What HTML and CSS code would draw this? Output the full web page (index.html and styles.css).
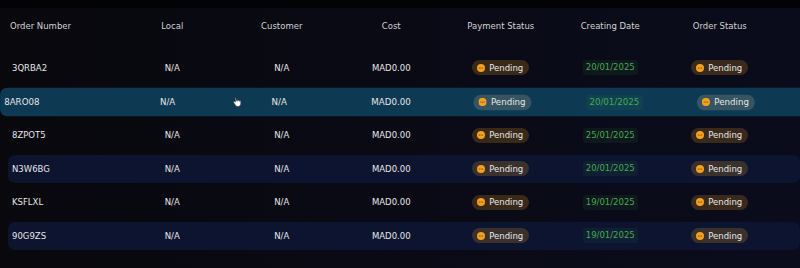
FILE: index.html
```html
<!DOCTYPE html>
<html>
<head>
<meta charset="utf-8">
<link rel="stylesheet" href="styles.css">
</head>
<body>
<div class="panel">
  <div class="row head">
    <div class="cell first">Order Number</div>
    <div class="cell">Local</div>
    <div class="cell">Customer</div>
    <div class="cell">Cost</div>
    <div class="cell">Payment Status</div>
    <div class="cell">Creating Date</div>
    <div class="cell">Order Status</div>
  </div>

  <div class="row">
    <div class="cell first">3QRBA2</div>
    <div class="cell">N/A</div>
    <div class="cell">N/A</div>
    <div class="cell">MAD0.00</div>
    <div class="cell"><span class="pill"><svg class="ic" viewBox="0 0 10 10"><circle cx="5" cy="5" r="5" fill="#f4a11f"/><circle cx="3" cy="5" r=".75" fill="#6b4210"/><circle cx="5" cy="5" r=".75" fill="#6b4210"/><circle cx="7" cy="5" r=".75" fill="#6b4210"/></svg>Pending</span></div>
    <div class="cell"><span class="date">20/01/2025</span></div>
    <div class="cell"><span class="pill"><svg class="ic" viewBox="0 0 10 10"><circle cx="5" cy="5" r="5" fill="#f4a11f"/><circle cx="3" cy="5" r=".75" fill="#6b4210"/><circle cx="5" cy="5" r=".75" fill="#6b4210"/><circle cx="7" cy="5" r=".75" fill="#6b4210"/></svg>Pending</span></div>
  </div>

  <div class="row hover">
    <div class="cell first">8ARO08</div>
    <div class="cell">N/A</div>
    <div class="cell">N/A</div>
    <div class="cell">MAD0.00</div>
    <div class="cell"><span class="pill"><svg class="ic" viewBox="0 0 10 10"><circle cx="5" cy="5" r="5" fill="#f4a11f"/><circle cx="3" cy="5" r=".75" fill="#6b4210"/><circle cx="5" cy="5" r=".75" fill="#6b4210"/><circle cx="7" cy="5" r=".75" fill="#6b4210"/></svg>Pending</span></div>
    <div class="cell"><span class="date">20/01/2025</span></div>
    <div class="cell"><span class="pill"><svg class="ic" viewBox="0 0 10 10"><circle cx="5" cy="5" r="5" fill="#f4a11f"/><circle cx="3" cy="5" r=".75" fill="#6b4210"/><circle cx="5" cy="5" r=".75" fill="#6b4210"/><circle cx="7" cy="5" r=".75" fill="#6b4210"/></svg>Pending</span></div>
    <svg class="cursor" viewBox="0 0 12 14"><path d="M3.5 1.2c.6 0 1 .4 1 1v4.3h.4V5.4c0-.5.4-.9.9-.9s.9.4.9.9v1.2h.3v-.8c0-.5.4-.9.9-.9s.9.4.9.9v1h.2v-.4c0-.5.4-.8.8-.8s.8.4.8.8v3.7c0 1.9-1.4 3.4-3.3 3.4H6.6c-1.1 0-2-.5-2.6-1.4L1.3 8.2c-.3-.4-.2-1 .2-1.2.4-.3.9-.2 1.2.1l.8 1V2.2c0-.6.4-1 1-1z" fill="#fff" stroke="#222" stroke-width=".6"/></svg>
  </div>

  <div class="row">
    <div class="cell first">8ZPOT5</div>
    <div class="cell">N/A</div>
    <div class="cell">N/A</div>
    <div class="cell">MAD0.00</div>
    <div class="cell"><span class="pill"><svg class="ic" viewBox="0 0 10 10"><circle cx="5" cy="5" r="5" fill="#f4a11f"/><circle cx="3" cy="5" r=".75" fill="#6b4210"/><circle cx="5" cy="5" r=".75" fill="#6b4210"/><circle cx="7" cy="5" r=".75" fill="#6b4210"/></svg>Pending</span></div>
    <div class="cell"><span class="date">25/01/2025</span></div>
    <div class="cell"><span class="pill"><svg class="ic" viewBox="0 0 10 10"><circle cx="5" cy="5" r="5" fill="#f4a11f"/><circle cx="3" cy="5" r=".75" fill="#6b4210"/><circle cx="5" cy="5" r=".75" fill="#6b4210"/><circle cx="7" cy="5" r=".75" fill="#6b4210"/></svg>Pending</span></div>
  </div>

  <div class="row alt">
    <div class="cell first">N3W6BG</div>
    <div class="cell">N/A</div>
    <div class="cell">N/A</div>
    <div class="cell">MAD0.00</div>
    <div class="cell"><span class="pill"><svg class="ic" viewBox="0 0 10 10"><circle cx="5" cy="5" r="5" fill="#f4a11f"/><circle cx="3" cy="5" r=".75" fill="#6b4210"/><circle cx="5" cy="5" r=".75" fill="#6b4210"/><circle cx="7" cy="5" r=".75" fill="#6b4210"/></svg>Pending</span></div>
    <div class="cell"><span class="date">20/01/2025</span></div>
    <div class="cell"><span class="pill"><svg class="ic" viewBox="0 0 10 10"><circle cx="5" cy="5" r="5" fill="#f4a11f"/><circle cx="3" cy="5" r=".75" fill="#6b4210"/><circle cx="5" cy="5" r=".75" fill="#6b4210"/><circle cx="7" cy="5" r=".75" fill="#6b4210"/></svg>Pending</span></div>
  </div>

  <div class="row">
    <div class="cell first">KSFLXL</div>
    <div class="cell">N/A</div>
    <div class="cell">N/A</div>
    <div class="cell">MAD0.00</div>
    <div class="cell"><span class="pill"><svg class="ic" viewBox="0 0 10 10"><circle cx="5" cy="5" r="5" fill="#f4a11f"/><circle cx="3" cy="5" r=".75" fill="#6b4210"/><circle cx="5" cy="5" r=".75" fill="#6b4210"/><circle cx="7" cy="5" r=".75" fill="#6b4210"/></svg>Pending</span></div>
    <div class="cell"><span class="date">19/01/2025</span></div>
    <div class="cell"><span class="pill"><svg class="ic" viewBox="0 0 10 10"><circle cx="5" cy="5" r="5" fill="#f4a11f"/><circle cx="3" cy="5" r=".75" fill="#6b4210"/><circle cx="5" cy="5" r=".75" fill="#6b4210"/><circle cx="7" cy="5" r=".75" fill="#6b4210"/></svg>Pending</span></div>
  </div>

  <div class="row alt">
    <div class="cell first">90G9ZS</div>
    <div class="cell">N/A</div>
    <div class="cell">N/A</div>
    <div class="cell">MAD0.00</div>
    <div class="cell"><span class="pill"><svg class="ic" viewBox="0 0 10 10"><circle cx="5" cy="5" r="5" fill="#f4a11f"/><circle cx="3" cy="5" r=".75" fill="#6b4210"/><circle cx="5" cy="5" r=".75" fill="#6b4210"/><circle cx="7" cy="5" r=".75" fill="#6b4210"/></svg>Pending</span></div>
    <div class="cell"><span class="date">19/01/2025</span></div>
    <div class="cell"><span class="pill"><svg class="ic" viewBox="0 0 10 10"><circle cx="5" cy="5" r="5" fill="#f4a11f"/><circle cx="3" cy="5" r=".75" fill="#6b4210"/><circle cx="5" cy="5" r=".75" fill="#6b4210"/><circle cx="7" cy="5" r=".75" fill="#6b4210"/></svg>Pending</span></div>
  </div>
</div>
</body>
</html>
```
FILE: styles.css
```css
html, body {
  margin: 0;
  padding: 0;
  background: #030305;
  width: 800px;
  height: 268px;
  overflow: hidden;
}
.panel {
  margin-top: 8px;
  height: 260px;
  padding-left: 8px;
  background: linear-gradient(90deg, #08080d 0%, #090a14 50%, #0a0c1c 100%);
  font-family: "DejaVu Sans", "Liberation Sans", sans-serif;
  font-size: 8.5px;
  color: #e6e6e6;
  display: flex;
  flex-direction: column;
  gap: 5.6px;
}
.row {
  position: relative;
  display: grid;
  grid-template-columns: repeat(7, 109.5px) 1fr;
  align-items: center;
  height: 28px;
  border-radius: 7px;
}
.row.head {
  height: 36px;
  margin-bottom: 4.4px;
  color: #d2d2d2;
}
.row.alt {
  background: #0c1430;
}
.row.hover {
  background: #0d3953;
  transform: scale(1.02);
}
.cell {
  text-align: center;
  white-space: nowrap;
}
.cell.first {
  text-align: left;
  padding-left: 4px;
}
.head .cell.first {
  padding-left: 2px;
}
.pill {
  display: inline-flex;
  align-items: center;
  gap: 4px;
  height: 15px;
  padding: 0 6px 0 5px;
  border-radius: 8px;
  background: rgba(245, 166, 35, 0.2);
  color: #e8e8e8;
}
.hover .pill {
  background: rgba(200, 180, 150, 0.22);
}
.ic {
  width: 8px;
  height: 8px;
  display: block;
}
.date {
  display: inline-block;
  height: 15px;
  line-height: 15px;
  padding: 0 3px;
  border-radius: 3px;
  background: rgba(60, 150, 80, 0.1);
  color: #49a94f;
}
.cursor {
  position: absolute;
  left: 228px;
  top: 8px;
  width: 9px;
  height: 11px;
}
```
